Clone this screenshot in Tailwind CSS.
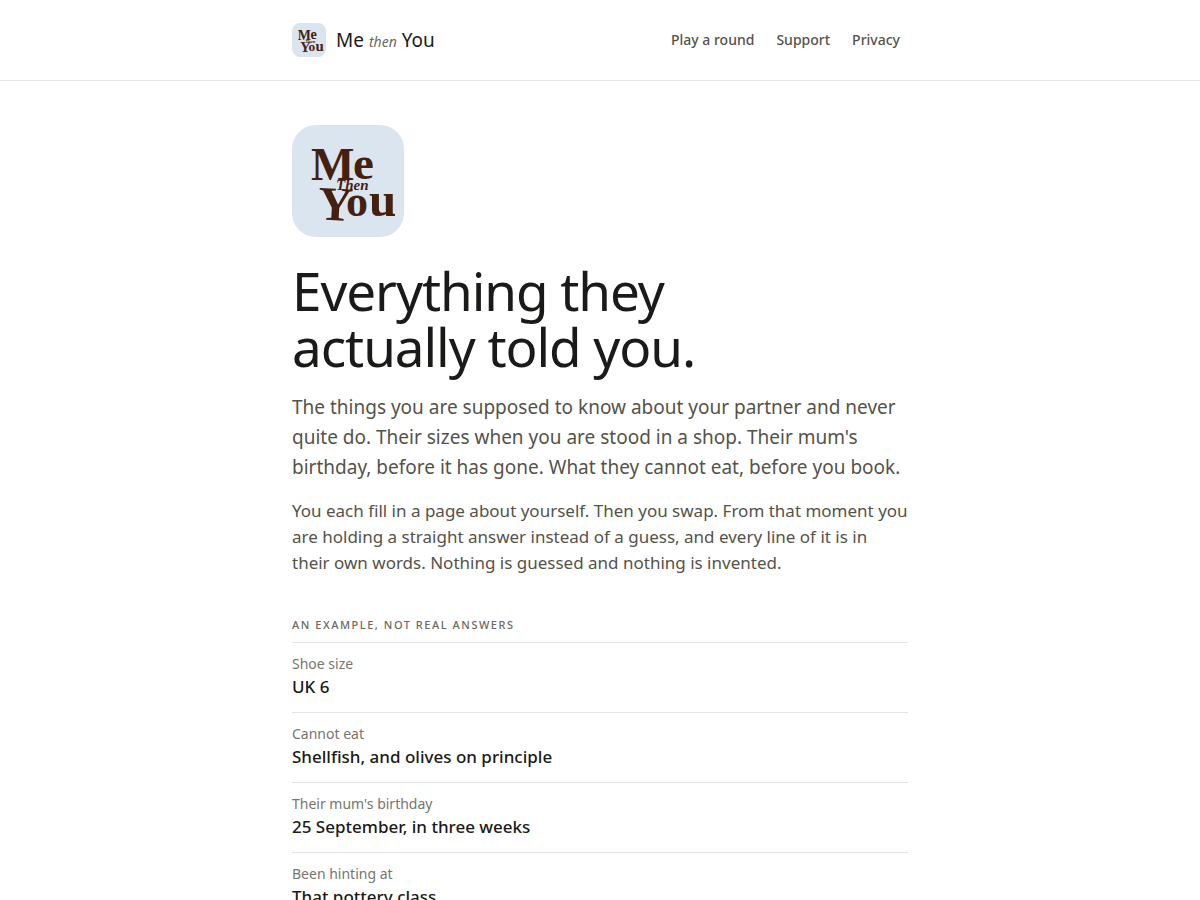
<!DOCTYPE html>
<html lang="en">
<head>
    <meta charset="UTF-8">
    <meta name="viewport" content="width=device-width, initial-scale=1.0">
    <title>Me then You</title>
    <script src="https://cdn.jsdelivr.net/npm/@tailwindcss/browser@4"></script>
</head>
<body class="bg-white font-['Noto_Sans',sans-serif] text-[17px] leading-[26px] text-[#1a1a18]">
    <!-- Logo, used in the header and at the top of the page -->
    <svg class="hidden" aria-hidden="true">
        <symbol id="logo" viewBox="0 0 112 112">
            <rect width="112" height="112" fill="#dbe5ef"/>
            <g fill="#45200f" font-family="'Liberation Serif', serif" font-weight="bold">
                <text x="19" y="55" font-size="46">M</text>
                <text x="61" y="54" font-size="47">e</text>
                <text x="44" y="65" font-size="15" font-style="italic">Then</text>
                <text x="26" y="95" font-size="48" transform="rotate(3 42 80)">Y</text>
                <text y="91" font-size="44"><tspan x="54">o</tspan><tspan x="77" font-size="49">u</tspan></text>
            </g>
        </symbol>
    </svg>

    <header class="border-b border-[#e4e4e2]">
        <div class="max-w-[664px] mx-auto h-20 px-6 flex items-center justify-between">
            <a href="#" class="flex items-center gap-[10px] text-[19px] leading-7">
                <svg class="size-[34px] rounded-lg" aria-hidden="true"><use href="#logo"/></svg>
                <span>Me <em class="text-[14px] leading-none text-[#6b6860]">then</em> You</span>
            </a>
            <nav class="flex gap-[22px] pr-2 text-[14px] font-medium text-[#55524a]">
                <a href="#" class="hover:underline">Play a round</a>
                <a href="#" class="hover:underline">Support</a>
                <a href="#" class="hover:underline">Privacy</a>
            </nav>
        </div>
    </header>

    <main class="max-w-[664px] mx-auto px-6 pt-11 pb-16">
        <svg class="size-28 rounded-3xl" role="img" aria-label="Me Then You"><use href="#logo"/></svg>

        <h1 class="mt-[26px] max-w-[480px] text-[53px] leading-[56px] tracking-[-0.02em]">Everything they actually told you.</h1>
        <p class="mt-[17px] text-[19px] leading-[30px] text-[#55524a]">The things you are supposed to know about your partner and never quite do. Their sizes when you are stood in a shop. Their mum's birthday, before it has gone. What they cannot eat, before you book.</p>
        <p class="mt-4 text-[#55524a]">You each fill in a page about yourself. Then you swap. From that moment you are holding a straight answer instead of a guess, and every line of it is in their own words. Nothing is guessed and nothing is invented.</p>

        <!-- Example answers -->
        <section class="mt-10">
            <h2 class="pb-2 text-[11px] leading-[18px] font-medium uppercase tracking-[0.14em] text-[#6b6860]">An example, not real answers</h2>
            <dl>
                <div class="border-t border-[#e4e4e2] pt-[10px] pb-[13px]">
                    <dt class="text-[14px] leading-[22px] text-[#78756d]">Shoe size</dt>
                    <dd class="font-medium leading-6">UK 6</dd>
                </div>
                <div class="border-t border-[#e4e4e2] pt-[10px] pb-[13px]">
                    <dt class="text-[14px] leading-[22px] text-[#78756d]">Cannot eat</dt>
                    <dd class="font-medium leading-6">Shellfish, and olives on principle</dd>
                </div>
                <div class="border-t border-[#e4e4e2] pt-[10px] pb-[13px]">
                    <dt class="text-[14px] leading-[22px] text-[#78756d]">Their mum's birthday</dt>
                    <dd class="font-medium leading-6">25 September, in three weeks</dd>
                </div>
                <div class="border-t border-[#e4e4e2] pt-[10px] pb-[13px]">
                    <dt class="text-[14px] leading-[22px] text-[#78756d]">Been hinting at</dt>
                    <dd class="font-medium leading-6">That pottery class</dd>
                </div>
            </dl>
        </section>
    </main>
</body>
</html>
